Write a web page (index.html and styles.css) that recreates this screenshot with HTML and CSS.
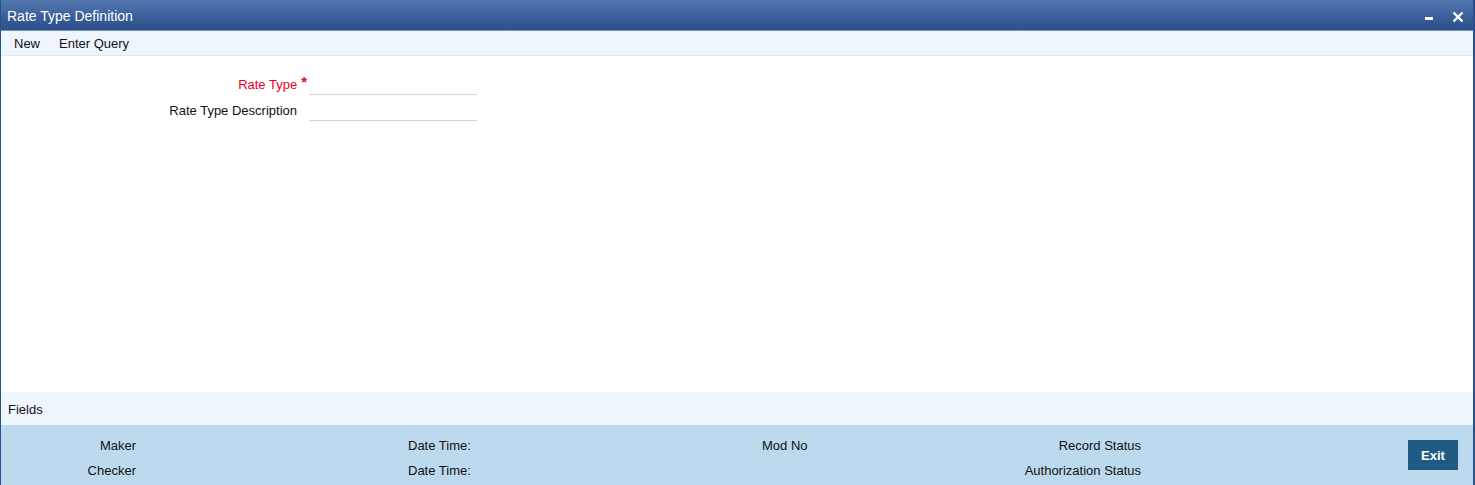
FILE: index.html
```html
<!DOCTYPE html>
<html>

<head>
    <title>Rate Type Definition</title>
    <link rel="stylesheet" href="styles.css">
</head>

<body>
    <div class="window">
        <div class="titleBar">
            <span class="titleText">Rate Type Definition</span>
            <span class="titleButtons">
                <svg class="winIcon" width="12" height="12" viewBox="0 0 12 12">
                    <rect x="2" y="6" width="8" height="3" fill="#fff" />
                </svg>
                <svg class="winIcon" width="12" height="12" viewBox="0 0 12 12">
                    <path d="M1.5 1.5 L10.5 10.5 M10.5 1.5 L1.5 10.5" stroke="#fff" stroke-width="2.4" />
                </svg>
            </span>
        </div>
        <div class="toolBar">
            <span class="toolItem">New</span>
            <span class="toolItem">Enter Query</span>
        </div>
        <div class="content">
            <div class="formRow">
                <label class="formLabel required">Rate Type<span class="star">*</span></label>
                <span class="inputLine"></span>
            </div>
            <div class="formRow">
                <label class="formLabel">Rate Type Description</label>
                <span class="inputLine"></span>
            </div>
        </div>
        <div class="fieldsBar">Fields</div>
        <div class="footer">
            <div class="auditGrid">
                <span class="right">Maker</span>
                <span></span>
                <span>Date Time:</span>
                <span>Mod No</span>
                <span class="right">Record Status</span>

                <span class="right">Checker</span>
                <span></span>
                <span>Date Time:</span>
                <span></span>
                <span class="right">Authorization Status</span>
            </div>
            <span class="exitButton">Exit</span>
        </div>
    </div>
</body>

</html>
```

FILE: styles.css
```css
body {
    margin: 0;
    font-family: "Liberation Sans", Arial, sans-serif;
    font-size: 13px;
    color: #111;
}

.window {
    height: 485px;
    display: flex;
    flex-direction: column;
    border-left: 1px solid #2b4e8c;
    border-right: 2px solid #2b4e8c;
    background: #fff;
}

/* title bar */
.titleBar {
    height: 30px;
    flex: none;
    display: flex;
    align-items: center;
    justify-content: space-between;
    padding: 0 9px 0 6px;
    background: linear-gradient(#5479b1, #3a5f9a 55%, #2c4f8b);
    border-bottom: 1px solid #7d98b0;
    color: #fff;
}

.titleText {
    font-size: 14px;
    padding-top: 2px;
}

.titleButtons {
    display: flex;
    gap: 17px;
    padding-top: 3px;
}

.winIcon {
    display: block;
}

/* toolbar */
.toolBar {
    height: 24px;
    flex: none;
    display: flex;
    align-items: center;
    gap: 19px;
    padding: 0 13px;
    background: #eef5fd;
    border-bottom: 1px solid #dfe6ee;
}

/* form */
.content {
    flex: 1;
    padding-top: 20px;
}

.formRow {
    display: flex;
    align-items: flex-start;
    height: 26px;
}

.formLabel {
    width: 296px;
    text-align: right;
    padding-top: 1px;
    line-height: 15px;
}

.required {
    color: #ee0022;
}

.star {
    position: relative;
    top: -2px;
    margin-left: 4px;
    margin-right: -10px;
    font-size: 15px;
    font-weight: bold;
    line-height: 0;
}

.inputLine {
    width: 168px;
    height: 18px;
    margin-left: 12px;
    border-bottom: 1px solid #d4d4d4;
}

/* fields bar */
.fieldsBar {
    height: 33px;
    flex: none;
    display: flex;
    align-items: center;
    padding: 2px 0 0 7px;
    box-sizing: border-box;
    background: #eef5fd;
}

/* footer */
.footer {
    height: 60px;
    flex: none;
    display: flex;
    align-items: center;
    background: #bdd9ed;
}

.auditGrid {
    display: grid;
    grid-template-columns: 135px 272px 354px 200px 179px;
    grid-auto-rows: 25px;
    align-items: center;
    padding-top: 5px;
}

.right {
    text-align: right;
}

.exitButton {
    margin-left: auto;
    margin-right: 15px;
    width: 50px;
    height: 30px;
    display: flex;
    align-items: center;
    justify-content: center;
    background: #1f5a82;
    color: #fff;
    font-weight: bold;
    font-size: 13px;
}
```
